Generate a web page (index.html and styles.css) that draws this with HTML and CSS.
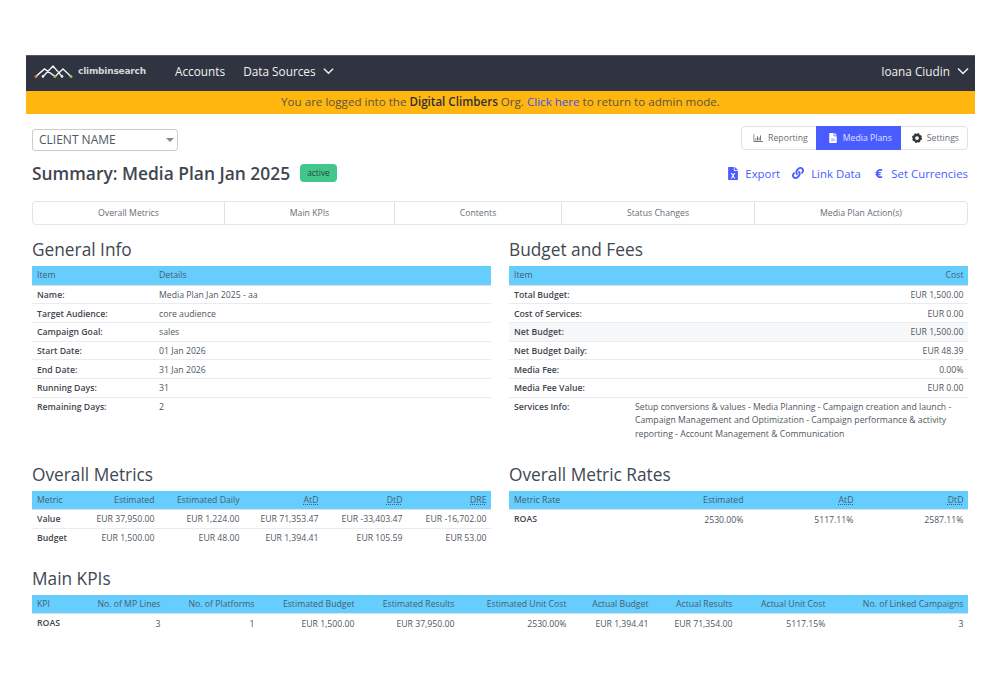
FILE: index.html
```html
<!DOCTYPE html>
<html lang="en">
<head>
<meta charset="utf-8">
<title>Summary: Media Plan Jan 2025</title>
<link rel="stylesheet" href="styles.css">
</head>
<body>
<div class="app">
  <header class="navbar">
    <div class="brand">
      <svg class="logo" viewBox="0 0 40 14" width="40" height="14" aria-hidden="true">
        <path d="M2 12.4 L10.5 5 L21 12.4 M9 12.4 L19 2 L28 12.4 M21 12.4 L29 5 L37 12.4" fill="none" stroke="#f2f2f2" stroke-width="1.4"/>
        <circle cx="2" cy="12.4" r="1.5" fill="#f07a2a"/>
        <circle cx="9" cy="12.4" r="1.3" fill="#f2f2f2"/>
        <circle cx="21" cy="12.4" r="1.5" fill="#8cc63f"/>
        <circle cx="28" cy="12.4" r="1.3" fill="#f2f2f2"/>
        <circle cx="37" cy="12.4" r="1.5" fill="#8cc63f"/>
      </svg>
      <span class="brand-name">climbinsearch</span>
    </div>
    <nav class="nav-links">
      <span>Accounts</span>
      <span class="nav-drop">Data Sources
        <svg class="chev" viewBox="0 0 12 8" aria-hidden="true"><path d="M1 1.5 L6 6.5 L11 1.5" fill="none" stroke="currentColor" stroke-width="1.5"/></svg>
      </span>
    </nav>
    <span class="nav-drop user">Ioana Ciudin
      <svg class="chev" viewBox="0 0 12 8" aria-hidden="true"><path d="M1 1.5 L6 6.5 L11 1.5" fill="none" stroke="currentColor" stroke-width="1.5"/></svg>
    </span>
  </header>
  <div class="banner">You are logged into the <b>Digital Climbers</b> Org. <a href="#">Click here</a> to return to admin mode.</div>

  <main class="content">
    <div class="toolbar">
      <div class="select">CLIENT NAME<span class="caret"></span></div>
      <div class="btn-group">
        <span class="btn">
          <svg class="ico-s" viewBox="0 0 512 512" aria-hidden="true"><path d="M32 64h32v352h448v40H32z M130 270h40v110h-40z M210 170h40v210h-40z M290 230h40v150h-40z M370 130h40v250h-40z" fill="currentColor"/></svg>
          Reporting</span>
        <span class="btn active">
          <svg class="ico-s" viewBox="0 0 384 512" aria-hidden="true"><path d="M224 136V0H24C11 0 0 11 0 24v464c0 13 11 24 24 24h336c13 0 24-11 24-24V160H248c-13 0-24-11-24-24zm64 236c0 7-5 12-12 12H108c-7 0-12-5-12-12v-8c0-7 5-12 12-12h168c7 0 12 5 12 12zm0-64c0 7-5 12-12 12H108c-7 0-12-5-12-12v-8c0-7 5-12 12-12h168c7 0 12 5 12 12zm96-186v6H256V0h6c6 0 12 3 17 7l98 98c4 5 7 11 7 17z" fill="currentColor"/></svg>
          Media Plans</span>
        <span class="btn">
          <svg class="ico-s dark" viewBox="0 0 24 24" aria-hidden="true"><circle cx="12" cy="12" r="7.5" fill="none" stroke="currentColor" stroke-width="6"/><circle cx="12" cy="12" r="10" fill="none" stroke="currentColor" stroke-width="4" stroke-dasharray="4.2 3.65"/></svg>
          Settings</span>
      </div>
    </div>

    <div class="title-row">
      <div class="title-left">
        <h1>Summary: Media Plan Jan 2025</h1>
        <span class="badge">active</span>
      </div>
      <div class="actions">
        <a href="#">
          <svg class="ico-m" viewBox="0 0 384 512" aria-hidden="true"><path d="M224 136V0H24C11 0 0 11 0 24v464c0 13 11 24 24 24h336c13 0 24-11 24-24V160H248c-13 0-24-11-24-24zm60 100-70 108 70 108h-52l-40-70-40 70h-52l70-108-70-108h52l40 70 40-70zm100-114v6H256V0h6c6 0 12 3 17 7l98 98c4 5 7 11 7 17z" fill="currentColor"/></svg>
          Export</a>
        <a href="#">
          <svg class="ico-l" viewBox="0 0 512 512" aria-hidden="true"><path d="M326.612 185.391c59.747 59.809 58.927 155.698.36 214.59-.11.12-.24.25-.36.37l-67.2 67.2c-59.27 59.27-155.699 59.262-214.96 0-59.27-59.26-59.27-155.7 0-214.96l37.106-37.106c9.84-9.84 26.786-3.3 27.294 10.606.648 17.722 3.826 35.527 9.69 52.721 1.986 5.822.567 12.262-3.783 16.612l-13.087 13.087c-28.026 28.026-28.905 73.66-1.155 101.96 28.024 28.579 74.086 28.749 102.325.51l67.2-67.19c28.191-28.191 28.073-73.757 0-101.83-3.701-3.694-7.429-6.564-10.341-8.569a16.037 16.037 0 0 1-6.947-12.606c-.396-10.567 3.348-21.456 11.698-29.806l21.054-21.055c5.521-5.521 14.182-6.199 20.584-1.731a152.482 152.482 0 0 1 20.522 17.197zM467.547 44.449c-59.261-59.262-155.69-59.27-214.96 0l-67.2 67.2c-.12.12-.25.25-.36.37-58.566 58.892-59.387 154.781.36 214.59a152.454 152.454 0 0 0 20.521 17.196c6.402 4.468 15.064 3.789 20.584-1.731l21.054-21.055c8.35-8.35 12.094-19.239 11.698-29.806a16.037 16.037 0 0 0-6.947-12.606c-2.912-2.005-6.64-4.875-10.341-8.569-28.073-28.073-28.191-73.639 0-101.83l67.2-67.19c28.239-28.239 74.3-28.069 102.325.51 27.75 28.3 26.872 73.934-1.155 101.96l-13.087 13.087c-4.35 4.35-5.769 10.79-3.783 16.612 5.864 17.194 9.042 34.999 9.69 52.721.509 13.906 17.454 20.446 27.294 10.606l37.106-37.106c59.271-59.259 59.271-155.699.001-214.959z" fill="currentColor"/></svg>
          Link Data</a>
        <a href="#"><span class="euro">€</span>Set Currencies</a>
      </div>
    </div>

    <div class="section-nav">
      <span>Overall Metrics</span>
      <span>Main KPIs</span>
      <span>Contents</span>
      <span>Status Changes</span>
      <span>Media Plan Action(s)</span>
    </div>

    <div class="two-col first">
      <section>
        <h2>General Info</h2>
        <table class="info">
          <thead><tr><th class="w122">Item</th><th>Details</th></tr></thead>
          <tbody>
            <tr><th>Name:</th><td>Media Plan Jan 2025 - aa</td></tr>
            <tr><th>Target Audience:</th><td>core audience</td></tr>
            <tr><th>Campaign Goal:</th><td>sales</td></tr>
            <tr><th>Start Date:</th><td>01 Jan 2026</td></tr>
            <tr><th>End Date:</th><td>31 Jan 2026</td></tr>
            <tr><th>Running Days:</th><td>31</td></tr>
            <tr class="last"><th>Remaining Days:</th><td>2</td></tr>
          </tbody>
        </table>
      </section>
      <section>
        <h2>Budget and Fees</h2>
        <table class="info">
          <thead><tr><th class="w126">Item</th><th class="r">Cost</th></tr></thead>
          <tbody>
            <tr><th>Total Budget:</th><td class="r">EUR 1,500.00</td></tr>
            <tr><th>Cost of Services:</th><td class="r">EUR 0.00</td></tr>
            <tr class="alt"><th>Net Budget:</th><td class="r">EUR 1,500.00</td></tr>
            <tr><th>Net Budget Daily:</th><td class="r">EUR 48.39</td></tr>
            <tr><th>Media Fee:</th><td class="r">0.00%</td></tr>
            <tr><th>Media Fee Value:</th><td class="r">EUR 0.00</td></tr>
            <tr class="last"><th>Services Info:</th><td class="wrap">Setup conversions &amp; values - Media Planning - Campaign creation and launch - Campaign Management and Optimization - Campaign performance &amp; activity reporting - Account Management &amp; Communication</td></tr>
          </tbody>
        </table>
      </section>
    </div>

    <div class="two-col second">
      <section>
        <h2>Overall Metrics</h2>
        <table class="num om">
          <thead><tr><th>Metric</th><th>Estimated</th><th>Estimated Daily</th><th><abbr>AtD</abbr></th><th><abbr>DtD</abbr></th><th><abbr>DRE</abbr></th></tr></thead>
          <tbody>
            <tr><th>Value</th><td>EUR 37,950.00</td><td>EUR 1,224.00</td><td>EUR 71,353.47</td><td>EUR -33,403.47</td><td>EUR -16,702.00</td></tr>
            <tr class="last"><th>Budget</th><td>EUR 1,500.00</td><td>EUR 48.00</td><td>EUR 1,394.41</td><td>EUR 105.59</td><td>EUR 53.00</td></tr>
          </tbody>
        </table>
      </section>
      <section>
        <h2>Overall Metric Rates</h2>
        <table class="num omr">
          <thead><tr><th>Metric Rate</th><th>Estimated</th><th><abbr>AtD</abbr></th><th><abbr>DtD</abbr></th></tr></thead>
          <tbody>
            <tr class="last"><th>ROAS</th><td>2530.00%</td><td>5117.11%</td><td>2587.11%</td></tr>
          </tbody>
        </table>
      </section>
    </div>

    <section class="kpis">
      <h2>Main KPIs</h2>
      <table class="num kpi">
        <thead><tr><th>KPI</th><th>No. of MP Lines</th><th>No. of Platforms</th><th>Estimated Budget</th><th>Estimated Results</th><th>Estimated Unit Cost</th><th>Actual Budget</th><th>Actual Results</th><th>Actual Unit Cost</th><th>No. of Linked Campaigns</th></tr></thead>
        <tbody>
          <tr class="last"><th>ROAS</th><td>3</td><td>1</td><td>EUR 1,500.00</td><td>EUR 37,950.00</td><td>2530.00%</td><td>EUR 1,394.41</td><td>EUR 71,354.00</td><td>5117.15%</td><td>3</td></tr>
        </tbody>
      </table>
    </section>
  </main>
</div>
</body>
</html>
```
FILE: styles.css
```css
* { box-sizing: border-box; }
html, body { margin: 0; background: #fff; }
body {
  padding: 55px 25px 0 26px;
  font-family: "Open Sans", "Noto Sans", sans-serif;
  color: #4f5760;
  font-size: 8.7px;
}
.navbar {
  height: 36px;
  background: #2f3440;
  border-top: 1px solid #555a64;
  color: #f1f2f3;
  display: flex;
  align-items: center;
  padding: 0 6px 5px 8px;
  font-size: 11.8px;
}
.brand { display: flex; align-items: center; gap: 4px; width: 141px; }
.logo { display: block; }
.brand-name {
  font-family: "DejaVu Sans", sans-serif;
  font-size: 9px;
  font-weight: 700;
  color: #d5d7da;
  letter-spacing: -0.2px;
}
.nav-links { display: flex; gap: 18px; flex: 1; }
.nav-drop { display: inline-flex; align-items: center; gap: 7px; }
.chev { width: 11px; height: 8px; display: block; }
.user .chev { width: 12px; }
.banner {
  height: 23px;
  background: #ffb60f;
  color: #5c5442;
  font-size: 11.6px;
  line-height: 22px;
  text-align: center;
}
.banner b { color: #2f3036; font-weight: 600; }
.banner a { color: #3e50f5; text-decoration: none; }
.content { padding: 12px 7px 0 6px; }
.toolbar { display: flex; justify-content: space-between; align-items: center; height: 24px; }
.select {
  width: 146px;
  height: 22px;
  margin-top: 3px;
  border: 1px solid #ccc;
  border-radius: 3px;
  padding-left: 6px;
  font-size: 12px;
  line-height: 20px;
  color: #4f5760;
  position: relative;
}
.caret {
  position: absolute;
  right: 3px;
  top: 8px;
  border: 4px solid transparent;
  border-top-color: #888;
  border-bottom-width: 0;
}
.btn-group { display: flex; border: 1px solid #e0e2e6; border-radius: 4px; height: 24px; }
.btn { display: flex; align-items: center; gap: 5px; padding: 0 8px 0 11px; color: #666e76; }
.btn.active { background: #4a5cff; color: #dfe3ff; padding: 0 9px 0 12px; margin: -1px 0; height: 24px; }
.ico-s { width: 10px; height: 10px; color: #4a5058; display: block; }
.btn.active .ico-s { color: #fff; }
.ico-s.dark { color: #33373d; }
.title-row { display: flex; justify-content: space-between; align-items: center; height: 26px; margin-top: 10px; }
.title-left { display: flex; align-items: center; gap: 10px; }
h1 { margin: 0; font-size: 17.4px; font-weight: 600; color: #3f4650; }
.badge {
  background: #42c68c;
  color: #27493b;
  border-radius: 4px;
  font-size: 8.4px;
  height: 18px;
  line-height: 18px;
  padding: 0 7px;
}
.actions { display: flex; gap: 12px; font-size: 11.4px; }
.actions a { color: #4a5cff; text-decoration: none; display: flex; align-items: center; gap: 7px; }
.ico-m { width: 10px; height: 13px; display: block; }
.ico-l { width: 12px; height: 12px; display: block; }
.euro { font-weight: 700; font-size: 13px; margin-right: 2px; margin-left: 2px; }
.section-nav {
  display: grid;
  grid-template-columns: 191px 170px 167px 193px 1fr;
  height: 24px;
  margin-top: 15px;
  border: 1px solid #e3e5e9;
  border-radius: 4px;
  text-align: center;
  line-height: 22px;
  color: #666e76;
}
.section-nav span + span { border-left: 1px solid #dfe1e6; }
.two-col { display: grid; grid-template-columns: 459px 459px; gap: 18px; }
.first { margin-top: 13px; height: 224.5px; }
.second { height: 104px; }
h2 { margin: 0; height: 28px; line-height: 23px; font-size: 17.3px; font-weight: 400; color: #404852; }
table { width: 100%; border-collapse: collapse; table-layout: fixed; font-size: 8.7px; }
thead tr { background: #66cdff; }
thead th {
  height: 19px;
  padding: 0 4.5px 0 5px;
  font-weight: 400;
  text-align: left;
  color: #44606f;
  border-bottom: 1px solid #dee2e6;
}
tbody th, tbody td { height: 18.7px; padding: 1px 4.5px 0 5px; border-bottom: 1px solid #e9ebee; text-align: left; }
tbody th { font-weight: 600; color: #3f454d; }
tbody .last th, tbody .last td { border-bottom: 0; }
.alt { background: #f6f7f9; }
thead th.r, tbody td.r { text-align: right; }
.w122 { width: 122px; }
.w126 { width: 121px; }
tbody td.wrap { line-height: 13.6px; padding: 3px 4.5px 0 5px; vertical-align: top; }
tbody .last th { vertical-align: top; padding-top: 3px; line-height: 13.6px; }
.info .last td { vertical-align: top; padding-top: 3px; line-height: 13.6px; }
.num thead th:not(:first-child), .num tbody td { text-align: right; }
abbr { text-decoration: underline dotted; }
.om th:nth-child(1) { width: 55px; }
.om th:nth-child(2) { width: 72px; }
.om th:nth-child(3) { width: 85px; }
.om th:nth-child(4) { width: 79px; }
.om th:nth-child(5) { width: 84px; }
.omr th:nth-child(1) { width: 125px; }
.omr th:nth-child(2) { width: 114px; }
.omr th:nth-child(3) { width: 110px; }
.kpi thead th:nth-child(1) { width: 40px; }
.kpi thead th:nth-child(2) { width: 93px; }
.kpi thead th:nth-child(3) { width: 94px; }
.kpi thead th:nth-child(4) { width: 100px; }
.kpi thead th:nth-child(5) { width: 100px; }
.kpi thead th:nth-child(6) { width: 112px; }
.kpi thead th:nth-child(7) { width: 82px; }
.kpi thead th:nth-child(8) { width: 84px; }
.kpi thead th:nth-child(9) { width: 93px; }
```
